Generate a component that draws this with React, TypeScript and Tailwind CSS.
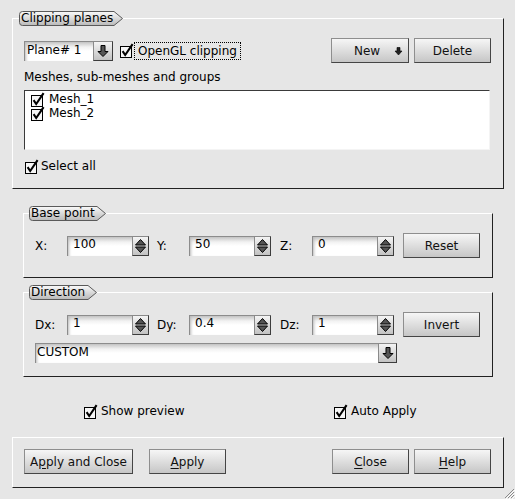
import React from "react";

function Check() {
  return (
    <svg width="15" height="15" viewBox="0 0 15 15" className="shrink-0 overflow-visible">
      <rect x="0.5" y="3.5" width="11" height="11" fill="#f6f6f6" stroke="#000" />
      <path d="M2.6 8.2 L5.2 12 L12.6 1.2" fill="none" stroke="#000" strokeWidth="2.1" strokeLinejoin="miter" />
    </svg>
  );
}

function SpinArrows() {
  return (
    <svg width="15" height="18" viewBox="0 0 15 18">
      <path d="M2.5 8 L7.5 2.5 L12.5 8 Z" fill="#555" stroke="#000" strokeWidth="1" strokeLinejoin="miter" />
      <path d="M2.5 10 L7.5 15.5 L12.5 10 Z" fill="#555" stroke="#000" strokeWidth="1" strokeLinejoin="miter" />
    </svg>
  );
}

function DownArrow() {
  return (
    <svg width="14" height="16" viewBox="0 0 14 16">
      <path d="M5 2.5 H9 V8.5 H12 L7 13.5 L2 8.5 H5 Z" fill="#555" stroke="#000" strokeWidth="1" strokeLinejoin="miter" />
    </svg>
  );
}

function SmallDownArrow() {
  return (
    <svg width="9" height="9" viewBox="0 0 9 9">
      <path d="M3 0.5 H6 V4 H8 L4.5 8 L1 4 H3 Z" fill="#222" stroke="#000" strokeWidth="0.6" />
    </svg>
  );
}

function Field({ children, className }: { children?: React.ReactNode; className: string }) {
  return (
    <div
      className={`h-full border-t border-l border-[#8c8c8c] bg-[linear-gradient(to_bottom,#c4c4c4,#f2f2f2_5px,#ffffff_9px)] shadow-[inset_3px_0_3px_-2px_#b8b8b8] leading-[14px] whitespace-nowrap ${className}`}
    >
      {children}
    </div>
  );
}

function ArrowBtn({ children, className }: { children: React.ReactNode; className: string }) {
  return (
    <div
      className={`h-full flex items-center justify-center border border-[#8a8a8a] border-r-[#3c3c3c] border-b-[#3c3c3c] bg-[linear-gradient(to_bottom,#f4f4f4,#c2c2c2)] ${className}`}
    >
      {children}
    </div>
  );
}

function Spin({ value }: { value: string }) {
  return (
    <div className="flex h-[20px] w-[82px] shrink-0">
      <Field className="flex-1 pl-[5px]">{value}</Field>
      <ArrowBtn className="w-[17px]">
        <SpinArrows />
      </ArrowBtn>
    </div>
  );
}

function Btn({ children, className }: { children: React.ReactNode; className: string }) {
  return (
    <div
      className={`h-[25px] shrink-0 flex items-center justify-center border border-[#8e8e8e] border-r-[#454545] border-b-[#454545] bg-[linear-gradient(to_bottom,#f6f6f6,#c6c6c6)] text-[#111] ${className}`}
    >
      {children}
    </div>
  );
}

function Tab({ label, id, w, className }: { label: string; id: string; w: number; className: string }) {
  const d = `M3.5 0.5 H${w - 9} L${w - 0.5} 7.5 L${w - 9} 14.5 H3.5 Q0.5 14.5 0.5 11.5 V3.5 Q0.5 0.5 3.5 0.5 Z`;
  return (
    <div className={`absolute h-[15px] ${className}`}>
      <svg width={w} height="15" viewBox={`0 0 ${w} 15`} className="absolute left-0 top-0">
        <defs>
          <linearGradient id={id} x1="0" y1="0" x2="0" y2="1">
            <stop offset="0" stopColor="#fafafa" />
            <stop offset="1" stopColor="#b9b9b9" />
          </linearGradient>
        </defs>
        <path d={d} fill={`url(#${id})`} stroke="#5a5a5a" strokeWidth="1" />
      </svg>
      <span className="relative pl-[2px] leading-[14px] whitespace-nowrap">{label}</span>
    </div>
  );
}

const frame = "relative border border-white border-r-[#222] border-b-[#222]";

export default function App() {
  return (
    <div className="relative w-[515px] h-[499px] overflow-hidden bg-[#e6e6e6] font-['DejaVu_Sans',sans-serif] text-[12px] leading-[14px] text-black flex flex-col">
      {/* Clipping planes */}
      <div className={`${frame} mt-[18px] ml-[12px] w-[492px] h-[171px] pt-[19px] pl-[11px] pr-[12px] flex flex-col shrink-0`}>
        <Tab label="Clipping planes" id="tg1" w={104} className="left-[6px] top-[-8px] w-[104px]" />
        <div className="flex items-center h-[25px]">
          <div className="flex h-[20px] w-[89px] shrink-0">
            <Field className="flex-1 pl-[2px] pt-[1px]">Plane# 1</Field>
            <ArrowBtn className="w-[20px]">
              <DownArrow />
            </ArrowBtn>
          </div>
          <div className="ml-[7px] flex items-center">
            <Check />
          </div>
          <div className="ml-[-1px] h-[18px] border border-dotted border-black px-[3px] flex items-center whitespace-nowrap">
            OpenGL clipping
          </div>
          <Btn className="ml-auto w-[78px] relative">
            <span className="mr-[6px]">New</span>
            <span className="absolute right-[5px] top-[8px] flex">
              <SmallDownArrow />
            </span>
          </Btn>
          <Btn className="ml-[5px] w-[77px]">Delete</Btn>
        </div>
        <div className="mt-[7px] h-[14px] whitespace-nowrap">Meshes, sub-meshes and groups</div>
        <div className="mt-[6px] w-[466px] h-[60px] shrink-0 bg-white border border-[#3a3a3a] border-r-[#f4f4f4] border-b-[#f4f4f4] pt-[1px] pl-[6px]">
          <div className="flex items-start h-[14px]">
            <Check />
            <span className="ml-[3px]">Mesh_1</span>
          </div>
          <div className="flex items-start h-[14px]">
            <Check />
            <span className="ml-[3px]">Mesh_2</span>
          </div>
        </div>
        <div className="mt-[9px] flex items-start h-[15px] pl-[1px]">
          <Check />
          <span className="ml-[1px]">Select all</span>
        </div>
      </div>

      {/* Base point */}
      <div className={`${frame} mt-[24px] ml-[23px] w-[470px] h-[65px] pt-[19px] pl-[11px] shrink-0`}>
        <Tab label="Base point" id="tg2" w={77} className="left-[5px] top-[-8px] w-[77px]" />
        <div className="flex items-center h-[25px]">
          <div className="w-[32px] shrink-0">X:</div>
          <Spin value="100" />
          <div className="ml-[8px] w-[32px] shrink-0">Y:</div>
          <Spin value="50" />
          <div className="ml-[9px] w-[32px] shrink-0">Z:</div>
          <Spin value="0" />
          <Btn className="ml-[9px] w-[77px]">Reset</Btn>
        </div>
      </div>

      {/* Direction */}
      <div className={`${frame} mt-[14px] ml-[23px] w-[470px] h-[85px] pt-[19px] pl-[11px] shrink-0`}>
        <Tab label="Direction" id="tg3" w={68} className="left-[5px] top-[-8px] w-[68px]" />
        <div className="flex items-center h-[25px]">
          <div className="w-[32px] shrink-0">Dx:</div>
          <Spin value="1" />
          <div className="ml-[8px] w-[32px] shrink-0">Dy:</div>
          <Spin value="0.4" />
          <div className="ml-[9px] w-[32px] shrink-0">Dz:</div>
          <Spin value="1" />
          <Btn className="ml-[9px] w-[77px]">Invert</Btn>
        </div>
        <div className="mt-[6px] flex h-[20px] w-[362px]">
          <Field className="flex-1 pl-[1px] pt-[1px]">CUSTOM</Field>
          <ArrowBtn className="w-[19px]">
            <DownArrow />
          </ArrowBtn>
        </div>
      </div>

      {/* Options */}
      <div className="mt-[27px] flex items-start h-[15px] shrink-0">
        <div className="ml-[84px] w-[250px] flex items-start">
          <Check />
          <span className="ml-[2px]">Show preview</span>
        </div>
        <div className="flex items-start">
          <Check />
          <span className="ml-[2px]">Auto Apply</span>
        </div>
      </div>

      {/* Buttons */}
      <div className={`${frame} mt-[18px] ml-[12px] w-[492px] h-[51px] pt-[11px] pl-[11px] pr-[12px] flex items-start shrink-0`}>
        <Btn className="w-[109px]">
          <span>
            A<span className="underline underline-offset-2">p</span>ply and Close
          </span>
        </Btn>
        <Btn className="ml-[16px] w-[77px]">
          <span>
            <span className="underline underline-offset-2">A</span>pply
          </span>
        </Btn>
        <Btn className="ml-auto w-[77px]">
          <span>
            <span className="underline underline-offset-2">C</span>lose
          </span>
        </Btn>
        <Btn className="ml-[5px] w-[77px]">
          <span>
            <span className="underline underline-offset-2">H</span>elp
          </span>
        </Btn>
      </div>

      {/* size grip */}
      <svg width="12" height="12" viewBox="0 0 12 12" className="absolute right-0 bottom-0">
        <path d="M11 2 L2 11 M11 5 L5 11 M11 8 L8 11" stroke="#8a8a8a" strokeWidth="1" />
        <path d="M12 3 L3 12 M12 6 L6 12 M12 9 L9 12" stroke="#ffffff" strokeWidth="1" />
      </svg>
    </div>
  );
}
